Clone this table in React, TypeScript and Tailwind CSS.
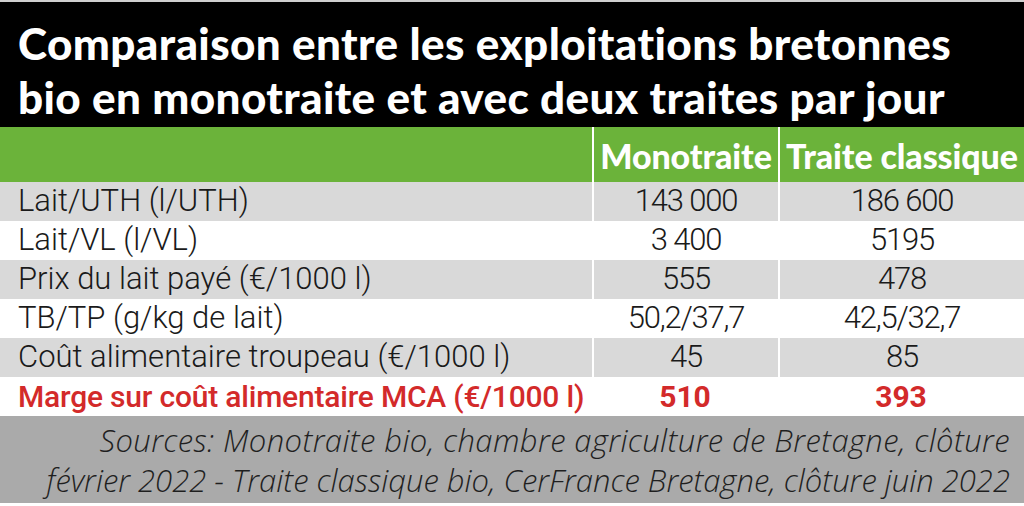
import React from 'react';

const rows = [
  { label: 'Lait/UTH (l/UTH)', mono: '143 000', classic: '186 600', gray: true },
  { label: 'Lait/VL (l/VL)', mono: '3 400', classic: '5195', gray: false },
  { label: 'Prix du lait payé (€/1000 l)', mono: '555', classic: '478', gray: true },
  { label: 'TB/TP (g/kg de lait)', mono: '50,2/37,7', classic: '42,5/32,7', gray: false },
  { label: 'Coût alimentaire troupeau (€/1000 l)', mono: '45', classic: '85', gray: true },
];

export default function App() {
  return (
    <div className="w-[1024px] h-[506px] bg-white flex flex-col overflow-hidden">
      <div className="h-[2px] bg-[#cfcfcf]" />
      <div className="h-[125px] bg-black px-[18px] pt-[14px] font-['Lato',sans-serif] font-black text-white text-[44px] leading-[54px] tracking-[0.4px] [font-variant-ligatures:none]">
        <div>Comparaison entre les exploitations bretonnes</div>
        <div>bio en monotraite et avec deux traites par jour</div>
      </div>

      <div className="flex h-[55px] bg-[#6bb33a] font-['Lato',sans-serif] font-black text-white text-[34px] tracking-[-0.1px] leading-none">
        <div className="w-[592px]" />
        <div className="w-[186px] border-l-2 border-white flex items-end justify-center pb-[9px]">Monotraite</div>
        <div className="flex-1 border-l-2 border-white flex items-end justify-center pb-[9px]">Traite classique</div>
      </div>

      <div className="font-['Roboto',sans-serif] text-[#1a1a1a] text-[31px]">
        {rows.map((r) => (
          <div key={r.label} className={`flex h-[39px] items-center ${r.gray ? 'bg-[#d9d9d9]' : 'bg-white'}`}>
            <div className="w-[592px] pl-[18px] font-light">{r.label}</div>
            <div className="w-[186px] h-full border-l-2 border-white flex items-center justify-center font-light tracking-[-1.2px]">{r.mono}</div>
            <div className="flex-1 h-full border-l-2 border-white flex items-center justify-center font-light tracking-[-1.2px]">{r.classic}</div>
          </div>
        ))}
        <div className="flex h-[39px] items-center bg-white text-[#d32a2a] font-medium text-[30px]">
          <div className="w-[592px] pl-[18px] tracking-[-0.2px]">Marge sur coût alimentaire MCA (€/1000 l)</div>
          <div className="w-[186px] flex justify-center font-bold">510</div>
          <div className="flex-1 flex justify-center font-bold">393</div>
        </div>
      </div>

      <div className="h-[87px] bg-[#aaaaaa] pr-[14px] pt-[4px] text-right font-['Open_Sans',sans-serif] italic font-light text-[#1f1f1f] text-[31px] leading-[40px]">
        <div className="tracking-[0.4px]">Sources: Monotraite bio, chambre agriculture de Bretagne, clôture</div>
        <div>février 2022 - Traite classique bio, CerFrance Bretagne, clôture juin 2022</div>
      </div>
      <div className="flex-1 bg-white" />
    </div>
  );
}
